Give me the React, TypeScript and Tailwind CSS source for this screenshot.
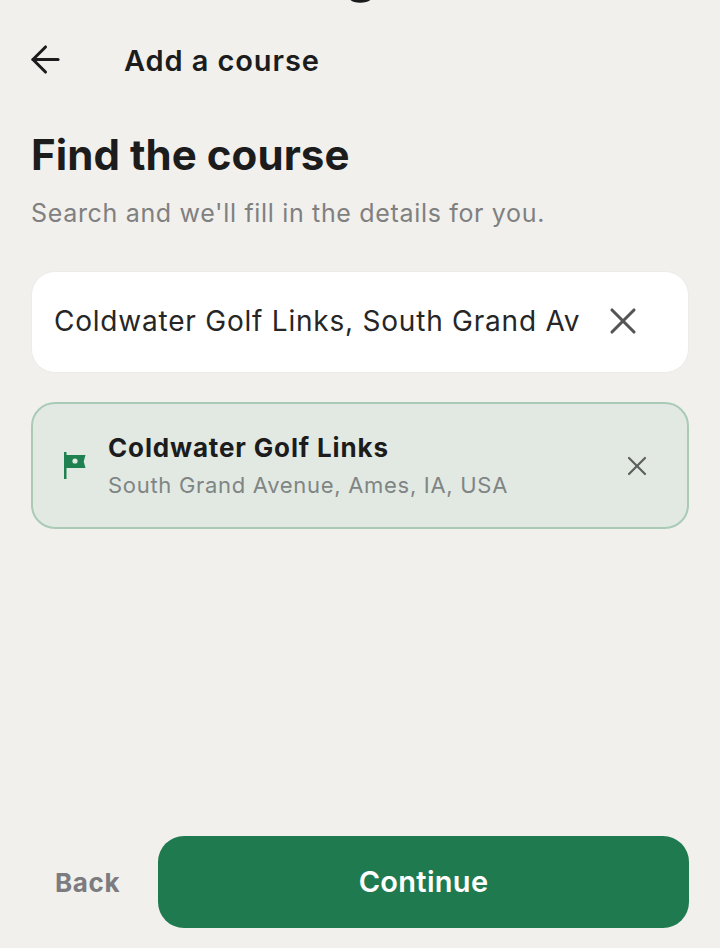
import { ArrowLeft, X } from "lucide-react";

export default function App() {
  return (
    <div className="relative flex h-[948px] w-[720px] flex-col overflow-hidden bg-[#f1f0ed] font-['Inter',sans-serif]">
      {/* clipped glyph from the screen above */}
      <svg className="absolute left-[348px] top-0" width="26" height="4" viewBox="0 0 26 4">
        <path d="M3 -2 C6 2 18 2 22 -2" fill="none" stroke="#1a1a1a" strokeWidth="3.5" />
      </svg>

      {/* Header */}
      <div className="flex h-[122px] items-center pl-[24px]">
        <ArrowLeft className="mb-[3px] h-[43px] w-[43px] text-[#1c1c1c]" strokeWidth={1.7} />
        <span className="ml-[57px] text-[29px] font-semibold tracking-[0.9px] text-[#1c1c1c]">Add a course</span>
      </div>

      {/* Heading */}
      <div className="px-[31px]">
        <h1 className="mt-[8px] text-[42px] font-bold leading-[50px] tracking-[0.07px] text-[#1c1c1c]">Find the course</h1>
        <p className="mt-[16px] text-[25px] leading-[34px] tracking-[0.67px] text-[#808080]">
          Search and we'll fill in the details for you.
        </p>

        {/* Search field */}
        <div className="mt-[41px] flex h-[102px] items-center rounded-[24px] border border-[#ecebe8] bg-white pb-[2px] pl-[22px] pr-[43px]">
          <span className="min-w-0 flex-1 overflow-hidden whitespace-nowrap text-[28px] tracking-[0.78px] text-[#262626]">
            Coldwater Golf Links, South Grand Av
          </span>
          <X className="ml-[10px] h-[44px] w-[44px] shrink-0 text-[#555555]" strokeWidth={1.7} />
        </div>

        {/* Selected course */}
        <div className="mt-[29px] flex h-[127px] items-center rounded-[24px] border-2 border-[#a9cbb6] bg-[#e2e9e3] pl-[31px] pr-[34px]">
          <svg className="h-[28px] w-[22px] shrink-0" viewBox="0 0 22 28">
            <path
              fillRule="evenodd"
              fill="#1f8050"
              d="M0 0h2.5v3h19l-1.8 6.5 1.8 6.5H2.5v11H0V0Zm11 6.4a2.6 2.6 0 1 0 0 5.2 2.6 2.6 0 0 0 0-5.2Z"
            />
          </svg>
          <div className="ml-[22px] min-w-0 flex-1">
            <div className="text-[26px] font-bold leading-[34px] tracking-[0.85px] text-[#1c1c1c]">
              Coldwater Golf Links
            </div>
            <div className="mt-[5px] text-[22px] leading-[30px] tracking-[0.7px] text-[#7f8583]">
              South Grand Avenue, Ames, IA, USA
            </div>
          </div>
          <X className="h-[32px] w-[32px] shrink-0 text-[#5c5f5d]" strokeWidth={1.6} />
        </div>
      </div>

      {/* Footer */}
      <div className="mt-auto flex items-center pb-[20px] pl-[55px] pr-[31px]">
        <span className="text-[26px] font-bold tracking-[0.6px] text-[#7b7b80]">Back</span>
        <button className="ml-[38px] flex h-[92px] flex-1 items-center justify-center rounded-[26px] bg-[#1f7b4f] text-[29px] font-semibold tracking-[0.3px] text-white">
          Continue
        </button>
      </div>
    </div>
  );
}
